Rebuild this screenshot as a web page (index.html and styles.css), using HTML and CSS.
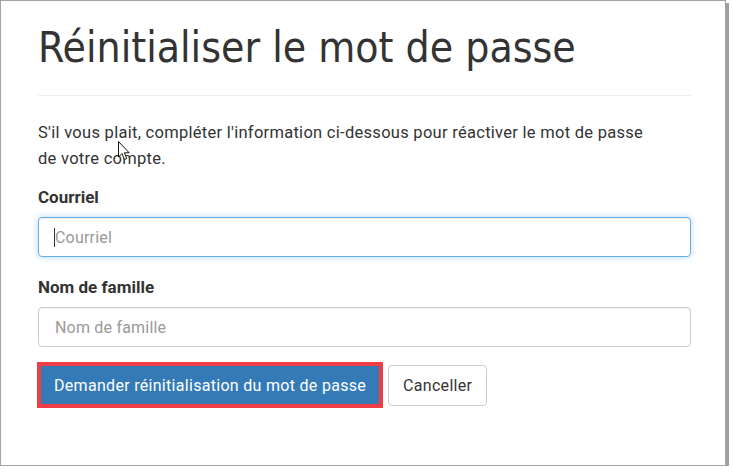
FILE: index.html
```html
<!DOCTYPE html>
<html lang="fr">
<head>
  <meta charset="UTF-8">
  <title>Réinitialiser le mot de passe</title>
  <link rel="stylesheet" href="styles.css">
</head>
<body>

<div class="frame">
  <h1 class="page-title">Réinitialiser le mot de passe</h1>
  <hr class="divider">

  <p class="intro">S'il vous plait, compléter l'information ci-dessous pour réactiver le mot de passe de votre compte.</p>

  <!-- mouse pointer captured in the screenshot -->
  <svg class="pointer" width="13" height="20" viewBox="0 0 13 20">
    <path d="M0.5 0.5 L0.5 16 L4 12.5 L6.5 18.5 L8.8 17.5 L6.4 11.8 L11.2 11.8 Z" fill="#fff" stroke="#111" stroke-width="1"/>
  </svg>

  <form class="reset-form">
    <div class="field">
      <label for="email">Courriel</label>
      <div class="input-wrap">
        <input type="text" id="email" class="input focused" placeholder="Courriel">
        <span class="caret"></span>
      </div>
    </div>
    <div class="field">
      <label for="lastname">Nom de famille</label>
      <input type="text" id="lastname" class="input" placeholder="Nom de famille">
    </div>
    <div class="actions">
      <span class="highlight">
        <button type="submit" class="btn btn-primary">Demander réinitialisation du mot de passe</button>
      </span>
      <button type="button" class="btn btn-default">Canceller</button>
    </div>
  </form>
</div>

</body>
</html>
```

FILE: styles.css
```css
html, body {
  margin: 0;
  padding: 0;
  background: #fff;
}
body {
  font-family: Roboto, "Liberation Sans", sans-serif;
  color: #333;
}
.frame {
  position: relative;
  box-sizing: border-box;
  width: 726px;
  height: 466px;
  border: 1px solid #a3a3a3;
  box-shadow: 3px 3px 0 #a0a0a0;
  padding: 0 34px 0 37px;
}
.page-title {
  font-family: "DejaVu Sans Condensed", "DejaVu Sans", sans-serif;
  font-stretch: condensed;
  font-weight: normal;
  font-size: 42.3px;
  margin: 0;
  padding-top: 21px;
  line-height: 52px;
  color: #333;
}
.divider {
  border: 0;
  border-top: 1px solid #eee;
  margin: 21px 0 0;
}
.intro {
  max-width: 610px;
  font-size: 16.5px;
  letter-spacing: 0.28px;
  line-height: 26px;
  margin: 24px 0 0;
  color: #333;
}
.pointer {
  position: absolute;
  left: 117px;
  top: 140px;
}
.reset-form {
  margin-top: 15px;
}
.field {
  display: flex;
  flex-direction: column;
  margin-bottom: 20px;
}
.field label {
  font-weight: bold;
  font-size: 17px;
  line-height: 20px;
  margin-bottom: 10px;
  color: #333;
}
.input-wrap {
  position: relative;
  display: flex;
  flex-direction: column;
}
.input {
  box-sizing: border-box;
  height: 40px;
  border: 1px solid #ccc;
  border-radius: 4px;
  padding: 0 16px;
  font-family: Roboto, sans-serif;
  font-size: 16px;
  letter-spacing: 0.2px;
  color: #555;
  box-shadow: inset 0 1px 1px rgba(0,0,0,0.075);
}
.input::placeholder {
  color: #999;
}
.input.focused {
  border-color: #66afe9;
  box-shadow: inset 0 1px 1px rgba(0,0,0,0.075), 0 0 6px rgba(102,175,233,0.5);
  outline: none;
}
.caret {
  position: absolute;
  left: 16px;
  top: 11px;
  width: 1px;
  height: 19px;
  background: #333;
}
.actions {
  display: flex;
  align-items: center;
  gap: 5px;
  margin-top: -5px;
}
.highlight {
  display: inline-flex;
  border: 4px solid #f03c44;
  margin-left: -1px;
}
.btn {
  font-family: Roboto, sans-serif;
  font-size: 16px;
  letter-spacing: 0.3px;
  height: 38px;
  padding: 0 13px;
  border-radius: 0;
  cursor: pointer;
}
.btn-primary {
  background: #337ab7;
  color: #fff;
  border: 0;
}
.btn-default {
  height: 41px;
  background: #fff;
  color: #333;
  border: 1px solid #ccc;
  border-radius: 4px;
  padding: 0 14px;
}
```
